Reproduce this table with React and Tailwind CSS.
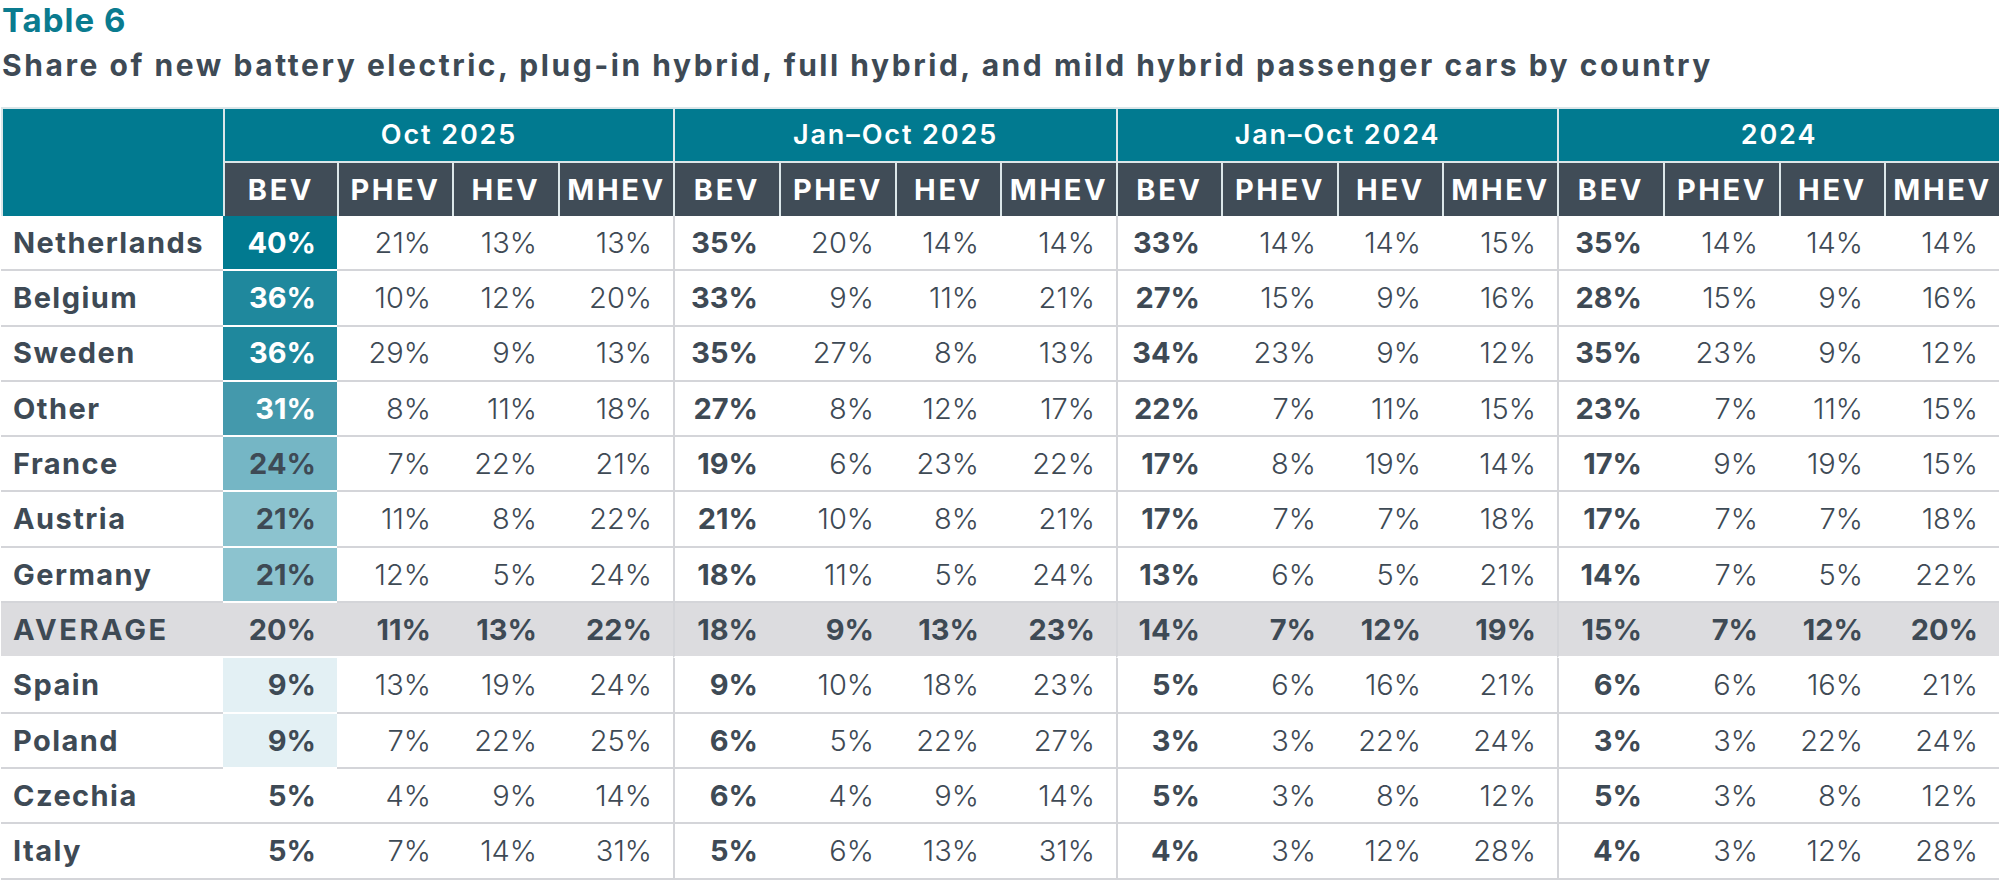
import React from "react";

const groups = ["Oct 2025", "Jan–Oct 2025", "Jan–Oct 2024", "2024"];
const subs = ["BEV", "PHEV", "HEV", "MHEV"];

// column widths in px, first one is the country column
const widths = [222, 114, 115, 106, 115, 106, 116, 105, 116, 105, 116, 105, 115, 106, 116, 105, 115];

const rows = [
  { name: "Netherlands", bev: "bg-[#017a90] text-white", data: [[40, 21, 13, 13], [35, 20, 14, 14], [33, 14, 14, 15], [35, 14, 14, 14]] },
  { name: "Belgium", bev: "bg-[#1f889d] text-white", data: [[36, 10, 12, 20], [33, 9, 11, 21], [27, 15, 9, 16], [28, 15, 9, 16]] },
  { name: "Sweden", bev: "bg-[#1f889d] text-white", data: [[36, 29, 9, 13], [35, 27, 8, 13], [34, 23, 9, 12], [35, 23, 9, 12]] },
  { name: "Other", bev: "bg-[#4499ac] text-white", data: [[31, 8, 11, 18], [27, 8, 12, 17], [22, 7, 11, 15], [23, 7, 11, 15]] },
  { name: "France", bev: "bg-[#75b6c5]", data: [[24, 7, 22, 21], [19, 6, 23, 22], [17, 8, 19, 14], [17, 9, 19, 15]] },
  { name: "Austria", bev: "bg-[#8cc3cf]", data: [[21, 11, 8, 22], [21, 10, 8, 21], [17, 7, 7, 18], [17, 7, 7, 18]] },
  { name: "Germany", bev: "bg-[#8cc3cf]", data: [[21, 12, 5, 24], [18, 11, 5, 24], [13, 6, 5, 21], [14, 7, 5, 22]] },
  { name: "AVERAGE", average: true, data: [[20, 11, 13, 22], [18, 9, 13, 23], [14, 7, 12, 19], [15, 7, 12, 20]] },
  { name: "Spain", bev: "bg-[#e3f0f4]", data: [[9, 13, 19, 24], [9, 10, 18, 23], [5, 6, 16, 21], [6, 6, 16, 21]] },
  { name: "Poland", bev: "bg-[#e3f0f4]", data: [[9, 7, 22, 25], [6, 5, 22, 27], [3, 3, 22, 24], [3, 3, 22, 24]] },
  { name: "Czechia", data: [[5, 4, 9, 14], [6, 4, 9, 14], [5, 3, 8, 12], [5, 3, 8, 12]] },
  { name: "Italy", data: [[5, 7, 14, 31], [5, 6, 13, 31], [4, 3, 12, 28], [4, 3, 12, 28]] },
];

function ValueCell({ value, groupIndex, colIndex, row }) {
  const isBev = colIndex === 0;
  const bold = isBev || row.average;
  const shaded = isBev && groupIndex === 0 && row.bev;
  return (
    <td
      className={[
        "pr-[21px] text-right align-middle border-b-2",
        bold ? "font-bold" : "font-light",
        shaded ? `${row.bev} border-white` : "border-[#d4d5d9]",
        row.average ? "border-white" : "",
        isBev && groupIndex > 0 ? "border-l-2 border-l-[#d4d5d9]" : "",
      ].join(" ")}
    >
      {value}%
    </td>
  );
}

export default function App() {
  return (
    <div className="h-[882px] w-[2000px] overflow-hidden bg-white font-['Inter','Liberation_Sans',sans-serif] text-[#3e4a55]">
      <div className="pt-[4px] pl-[2px] text-[33px] font-bold leading-[33px] tracking-[0.03em] text-[#0a7b8f]">Table 6</div>
      <div className="mt-[14px] pl-[2px] text-[30px] font-bold leading-[29px] tracking-[0.085em]">
        Share of new battery electric, plug-in hybrid, full hybrid, and mild hybrid passenger cars by country
      </div>

      <table className="mt-[27px] ml-[1px] table-fixed border-separate border-spacing-0 text-[29px]">
        <colgroup>
          {widths.map((w, i) => (
            <col key={i} style={{ width: w }} />
          ))}
        </colgroup>
        <thead>
          <tr className="h-[54px]">
            <th rowSpan={2} className="border-t-2 border-l-2 border-[#dbe6e9] bg-[#017a90]" />
            {groups.map((g) => (
              <th
                key={g}
                colSpan={4}
                className="border-t-2 border-l-2 border-[#dbe6e9] bg-[#017a90] text-center text-[27px] font-semibold tracking-[0.07em] text-white"
              >
                {g}
              </th>
            ))}
          </tr>
          <tr className="h-[55px]">
            {groups.map((g) =>
              subs.map((s) => (
                <th
                  key={g + s}
                  className="border-t-2 border-l-2 border-[#dbe6e9] bg-[#404c57] text-center text-[29px] font-bold tracking-[0.09em] text-white"
                >
                  {s}
                </th>
              ))
            )}
          </tr>
        </thead>
        <tbody>
          {rows.map((row) => (
            <tr key={row.name} className={row.average ? "h-[55.3px] bg-[#dcdcdf]" : "h-[55.3px]"}>
              <td
                className={[
                  "pl-[12px] align-middle font-bold border-b-2",
                  row.average ? "tracking-[0.09em] border-white" : "tracking-[0.05em] border-[#d4d5d9]",
                ].join(" ")}
              >
                {row.name}
              </td>
              {row.data.map((group, gi) =>
                group.map((v, ci) => (
                  <ValueCell key={`${gi}-${ci}`} value={v} groupIndex={gi} colIndex={ci} row={row} />
                ))
              )}
            </tr>
          ))}
        </tbody>
      </table>
    </div>
  );
}
